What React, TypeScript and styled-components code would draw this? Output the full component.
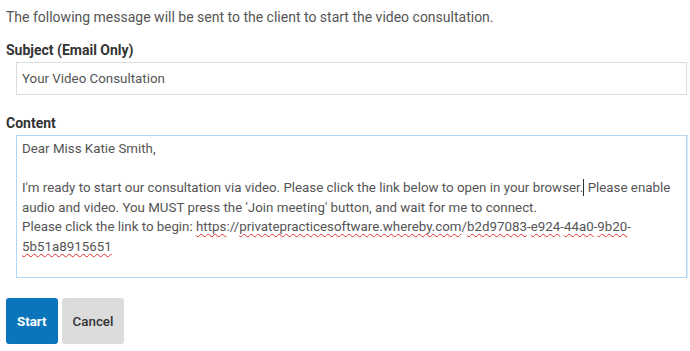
import styled, { createGlobalStyle } from "styled-components";

const GlobalStyle = createGlobalStyle`
  body {
    margin: 0;
    background: #fff;
    font-family: Roboto, "Liberation Sans", sans-serif;
    color: #555;
  }
`;

const Page = styled.div`
  display: flex;
  flex-direction: column;
  padding: 7px 3px 0 6px;
`;
const Intro = styled.p`
  margin: 0 0 13px;
  font-size: 14px;
  line-height: 20px;
  color: #555;
`;
const Label = styled.label`
  display: block;
  font-size: 14px;
  line-height: 20px;
  font-weight: 700;
  color: #333;
  margin-bottom: 2px;
`;
const Field = styled.div`
  margin: 0 0 18px 10px;
`;
const TextInput = styled.input`
  box-sizing: border-box;
  width: 671px;
  height: 33px;
  padding: 0 5px;
  border: 1px solid #dcdcdc;
  border-radius: 0;
  font-family: inherit;
  font-size: 13.333px;
  color: #555;
  outline: none;
`;
const TextBox = styled.div`
  box-sizing: border-box;
  width: 671px;
  height: 143px;
  padding: 3px 5px;
  border: 1px solid #b3d6f2;
  box-shadow: 1px 0 0 #d6e9f8;
  font-size: 13.333px;
  line-height: 19.6px;
  color: #555;
  white-space: nowrap;
`;
const Spell = styled.span`
  text-decoration: underline wavy #e03030;
  text-decoration-thickness: 1px;
  text-underline-offset: 2px;
`;
const Caret = styled.span`
  display: inline-block;
  width: 1px;
  height: 17px;
  background: #333;
  vertical-align: -4px;
`;
const Actions = styled.div`
  display: flex;
  gap: 4px;
  margin-top: 2px;
`;
const Button = styled.button<{ $primary?: boolean }>`
  height: 46px;
  padding: 0 11px;
  border: none;
  border-radius: 3px;
  font-family: inherit;
  font-size: 13.333px;
  font-weight: ${(p) => (p.$primary ? 700 : 500)};
  background: ${(p) => (p.$primary ? "#0a75ba" : "#dcdcdc")};
  color: ${(p) => (p.$primary ? "#fff" : "#333")};
  cursor: pointer;
`;

export default function App() {
  return (
    <>
      <GlobalStyle />
      <Page>
        <Intro>
          The following message will be sent to the client to start the video
          consultation.
        </Intro>
        <Label>Subject (Email Only)</Label>
        <Field>
          <TextInput defaultValue="Your Video Consultation" />
        </Field>
        <Label>Content</Label>
        <Field>
          <TextBox role="textbox">
            Dear Miss Katie Smith,
            <br />
            <br />
            I'm ready to start our consultation via video. Please click the
            link below to open in your browser.
            <Caret /> Please enable
            <br />
            audio and video. You MUST press the 'Join meeting' button, and wait
            for me to connect.
            <br />
            Please click the link to begin: <Spell>https</Spell>://
            <Spell>privatepracticesoftware.whereby.com</Spell>/
            <Spell>b2d97083</Spell>-<Spell>e924</Spell>-<Spell>44a0</Spell>-
            <Spell>9b20</Spell>-
            <br />
            <Spell>5b51a8915651</Spell>
          </TextBox>
        </Field>
        <Actions>
          <Button $primary>Start</Button>
          <Button>Cancel</Button>
        </Actions>
      </Page>
    </>
  );
}
